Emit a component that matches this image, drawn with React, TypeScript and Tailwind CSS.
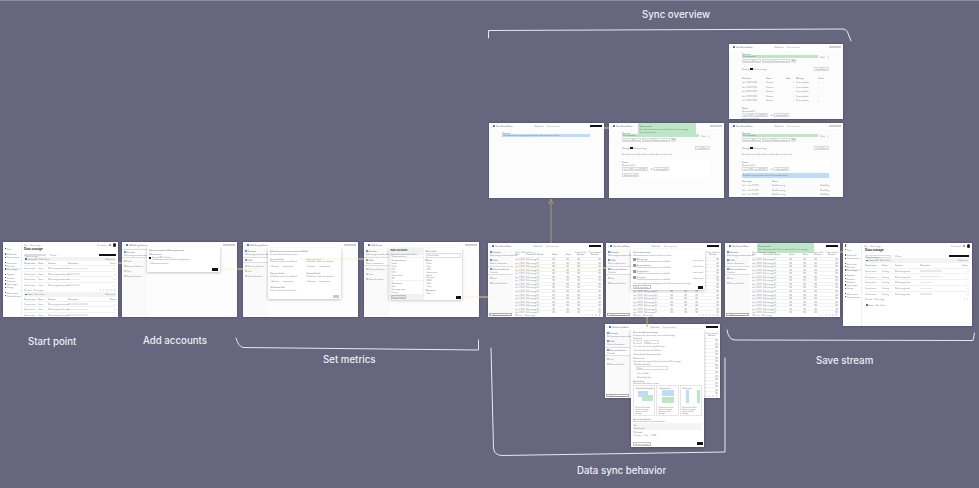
import type { ReactNode } from "react";

const syncRows = Array.from({ length: 16 }, (_, i) => i);
const steps = [
  { title: "Accounts", sub: "Bulk storage accounts selected" },
  { title: "Fields", sub: "Metrics, dimensions" },
  { title: "Data sync behavior", sub: "Schedule" },
  { title: "Sync", sub: "" },
  { title: "Review & confirm", sub: "" },
];

const Frame = ({ className, children }: { className: string; children?: ReactNode }) => (
  <div className={`absolute overflow-hidden bg-white shadow-[0_0_2px_rgba(30,30,50,0.45)] ${className}`}>{children}</div>
);

const Line = ({ className = "", children }: { className?: string; children: ReactNode }) => (
  <div className={`text-[1.8px] leading-[2px] whitespace-nowrap text-[#55565c] opacity-70 ${className}`}>{children}</div>
);

const Toast = ({ className }: { className: string }) => (
  <div className={`absolute bg-[#bce6c6] p-[1.5px] ${className}`}>
    <Line className="font-bold">Stream saved</Line>
    <Line className="mt-[1px]">Your data stream has been saved and will sync to storage</Line>
    <Line className="mt-[1.5px]">View sync overview</Line>
  </div>
);

const Header = ({ black = false, pills = false, title = "Data Stream Name" }: { black?: boolean; pills?: boolean; title?: string }) => (
  <div className="flex h-[6px] shrink-0 items-center gap-[1px] bg-white px-[2px]">
    <span className="text-[2px] leading-none text-[#888]">‹</span>
    <div className="h-[2.5px] w-[2.5px] rounded-[0.5px] bg-[#2f74d8]" />
    <Line className="font-bold">{title}</Line>
    {pills && (
      <div className="ml-[20px] flex gap-[3px]">
        <Line className="bg-[#eee] px-[1px]">Sync now</Line>
        <Line>Sync overview</Line>
      </div>
    )}
    <div className={`ml-auto h-[2.5px] w-[12px] ${black ? "bg-[#111]" : "bg-[#cfcfd2]"}`} />
  </div>
);

const Steps = ({ active, open = 5, button = false }: { active: number; open?: number; button?: boolean }) => (
  <div className="flex w-[25px] shrink-0 flex-col gap-[1px] bg-[#fafafa] pt-[1px]">
    {steps.map((step, i) => (
      <div key={step.title} className={`px-[2px] py-[1px] ${i === active ? "border-y-[0.3px] border-[#ddd] bg-white" : ""}`}>
        <div className="flex items-center gap-[1px]">
          <div className={`h-[1.5px] w-[1.5px] rounded-full ${i <= active ? "bg-[#2f74d8]" : "bg-[#bbb]"}`} />
          <Line className={i <= active ? "font-bold" : ""}>{step.title}</Line>
        </div>
        {step.sub && i < open && <Line className="mt-[1px]">{step.sub}</Line>}
      </div>
    ))}
    {button && (
      <div className="mx-[1px] mt-auto mb-[1px] flex h-[3px] items-center justify-center border-[0.3px] border-[#aaa]">
        <Line>Back to accounts</Line>
      </div>
    )}
  </div>
);

const SyncTable = () => (
  <div className="flex min-w-0 flex-1 flex-col px-[2px] pt-[1px]">
    <div className="flex h-[4px] items-center gap-[1px]">
      <Line>Filters</Line>
      <Line>Bulk accounts</Line>
      <Line className="ml-auto">Export to file</Line>
      <Line className="ml-[2px]">Sync selected</Line>
    </div>
    <div className="grid grid-cols-[11px_26px_14px_11px_14px_1fr] items-center">
      {["Date", "Partition ID / Stream", "Status", "Rows", "Duration", "Records"].map((h) => (
        <Line key={h} className="h-[3.5px] font-semibold">{h}</Line>
      ))}
      {syncRows.map((r) => (
        <div key={r} className="col-span-6 grid h-[3.55px] grid-cols-[11px_26px_14px_11px_14px_1fr] items-center border-t-[0.2px] border-[#f2f2f2]">
          <Line>Jun 2 2023</Line>
          <Line>Bulk storage 01</Line>
          <Line>100</Line>
          <Line>100</Line>
          <Line>100</Line>
          <Line className="text-right">100</Line>
        </div>
      ))}
    </div>
    <div className="mt-auto mb-[1px] flex h-[3px] items-center gap-[2px]">
      <Line>100 rows</Line>
      <Line>50 per page</Line>
      <Line className="ml-auto tracking-[1px]">1 2 3 4 5 6</Line>
    </div>
  </div>
);

const SyncScreen = ({ black = true }: { black?: boolean }) => (
  <div className="flex h-full flex-col">
    <Header black={black} pills />
    <div className="flex min-h-0 flex-1">
      <Steps active={2} button />
      <SyncTable />
    </div>
  </div>
);

const StorageRow = ({ status, green, long }: { status: string; green: boolean; long: boolean }) => (
  <div className="grid h-[5.5px] grid-cols-[14px_10px_20px_1fr_6px] items-center border-t-[0.2px] border-[#f2f2f2]">
    <Line>Stream name</Line>
    <Line className={green ? "text-[#2a9a55]" : "text-[#2f74d8]"}>{status}</Line>
    <Line>Bulk storage bucket path</Line>
    <div className={`h-[1.5px] bg-[#e8e8ea] ${long ? "w-[20px]" : "w-[12px]"}`} />
    <Line className="text-right">• •</Line>
  </div>
);

const Nav = ({ logo = false }: { logo?: boolean }) => (
  <div className="flex w-[19px] shrink-0 flex-col gap-[1.2px] border-r-[0.2px] border-[#eee] pt-[1px] pl-[1.5px]">
    <div className={`mb-[1px] h-[2.5px] w-[1px] ${logo ? "bg-[#e02020]" : "bg-white"}`} />
    {["Home", "", "Dashboards", "Custom reports", "", "Source data", "Data links", "Data storage", "", "Segments", "Attributes", "Audiences", "Tag manager", "Settings", "", "Admin center", "Connected apps"].map((item, i) =>
      item ? (
        <div key={i} className={`flex items-center gap-[0.7px] ${item === "Data storage" ? "bg-[#e9f0fb]" : ""}`}>
          <div className="h-[1.2px] w-[1.2px] bg-[#556]" />
          <Line>{item}</Line>
        </div>
      ) : (
        <div key={i} className="h-[1px]" />
      ),
    )}
  </div>
);

const TopBar = () => (
  <div className="flex h-[6px] items-center gap-[2px] px-[2px]">
    <Line>Data</Line>
    <Line>Data storage</Line>
    <Line className="ml-auto">My account</Line>
    <div className="h-[1.5px] w-[1.5px] rounded-full bg-[#888]" />
    <div className="h-[3.5px] w-[3.5px] rounded-full bg-[#222]" />
  </div>
);

const SectionBar = ({ label, green, children }: { label: string; green: boolean; children?: ReactNode }) => (
  <div className="flex h-[4.5px] items-center gap-[1px] bg-[#f3f3f4] px-[1px]">
    <div className="h-[1.5px] w-[1.5px] bg-[#2f74d8]" />
    <Line className="font-semibold">{label}</Line>
    <Line className={green ? "text-[#2a9a55]" : "text-[#2f74d8]"}>Active</Line>
    {children}
  </div>
);

const columns = ["Stream name", "Status", "Account", "Description", "Action"];

const StartPoint = () => (
  <div className="flex h-full">
    <Nav />
    <div className="min-w-0 flex-1">
      <TopBar />
      <div className="px-[2px]">
        <div className="text-[3px] font-bold leading-none text-[#333]">Data storage</div>
        <div className="mt-[2.5px] flex h-[3px] items-center gap-[4px]">
          <div className="h-[2.5px] w-[22px] border-[0.2px] border-[#ddd]"><Line>Search streams</Line></div>
          <Line>All time</Line>
          <div className="ml-auto h-[2.5px] w-[17px] bg-[#111]" />
        </div>
        <SectionBar label="Amazon S3 - Prod" green>
          <Line className="ml-auto">Add stream</Line>
        </SectionBar>
        <div className="grid h-[4px] grid-cols-[14px_10px_20px_1fr_6px] items-center">
          {columns.map((h) => <Line key={h} className="font-semibold">{h}</Line>)}
        </div>
        {[true, false, false, false].map((long, i) => <StorageRow key={i} status="Active" green long={long} />)}
        <div className="flex h-[5px] items-center gap-[2px]">
          <Line>25 items</Line>
          <Line>10 per page</Line>
          <Line className="ml-auto tracking-[1px]">1 2 3 4 5</Line>
        </div>
        <SectionBar label="Azure - Test" green>
          <Line className="ml-auto">Add stream</Line>
        </SectionBar>
        <div className="grid h-[4px] grid-cols-[14px_10px_20px_1fr_6px] items-center">
          {columns.map((h) => <Line key={h} className="font-semibold">{h}</Line>)}
        </div>
        {[true, true, true].map((long, i) => <StorageRow key={i} status="Active" green long={long} />)}
      </div>
    </div>
  </div>
);

const SaveStream = () => (
  <div className="flex h-full">
    <Nav logo />
    <div className="min-w-0 flex-1">
      <TopBar />
      <div className="px-[3px]">
        <div className="text-[3px] font-bold leading-none text-[#333]">Data storage</div>
        <div className="mt-[2.5px] flex h-[3px] items-center gap-[4px]">
          <div className="h-[3px] w-[26px] border-[0.2px] border-[#ddd]"><Line>Search streams</Line></div>
          <Line>All time</Line>
          <div className="ml-auto h-[2.5px] w-[20px] bg-[#111]" />
        </div>
        <div className="mt-[0.5px]">
          <SectionBar label="Amazon S3 - Prod" green={false}>
            <Line className="ml-auto">Add stream</Line>
          </SectionBar>
        </div>
        <div className="grid h-[5px] grid-cols-[17px_13px_25px_1fr_7px] items-center">
          {columns.map((h) => <Line key={h} className="font-semibold">{h}</Line>)}
        </div>
        {[true, true, false, false, false].map((long, i) => (
          <div key={i} className="grid h-[5.8px] grid-cols-[17px_13px_25px_1fr_7px] items-center border-t-[0.2px] border-[#f2f2f2]">
            <Line>Stream name</Line>
            <Line className="text-[#2f74d8]">Syncing</Line>
            <Line>Bulk storage path</Line>
            <div className={`h-[1.5px] bg-[#e8e8ea] ${long ? "w-[22px]" : "w-[12px]"}`} />
            <Line className="text-right">• •</Line>
          </div>
        ))}
        <div className="flex h-[6px] items-center gap-[2px]">
          <Line>25 items</Line>
          <Line>10 per page</Line>
          <Line className="ml-auto tracking-[1px]">1 2</Line>
        </div>
        <div className="mt-[0.5px] flex h-[4.5px] items-center gap-[1px] px-[1px]">
          <div className="h-[1.5px] w-[1.5px] bg-[#2f74d8]" />
          <Line className="font-semibold">Azure - Test</Line>
          <Line className="text-[#2a9a55]">Active</Line>
        </div>
      </div>
    </div>
  </div>
);

const WizardFrame = ({ title, active, open, children }: { title: string; active: number; open: number; children?: ReactNode }) => (
  <div className="relative flex h-full flex-col">
    <Header title={title} />
    <div className="flex min-h-0 flex-1">
      <Steps active={active} open={open} />
      <div className="flex-1 bg-[#fdfdfd]" />
    </div>
    {children}
  </div>
);

const Modal = ({ className, children }: { className: string; children: ReactNode }) => (
  <div className={`absolute bg-white p-[2px] shadow-[0_0.5px_3px_rgba(0,0,0,0.3)] ${className}`}>{children}</div>
);

const MetricOption = ({ title }: { title: string }) => (
  <div>
    <Line className="font-semibold">{title}</Line>
    <Line className="mt-[0.7px]">Select how values are collected</Line>
    <div className="mt-[3px] flex gap-[3px]">
      <Line className="text-[#2f74d8]">▪ Revenue</Line>
      <Line>▫ Impressions</Line>
    </div>
  </div>
);

const SortPanel = () => (
  <div className="flex h-full">
    <div className="w-[35px] bg-[#f1f1f2] p-[1.5px]">
      <div className="text-[2.4px] font-bold leading-none text-[#444]">Bulk Accounts</div>
      <Line className="mt-[1px]">Account list and attribute filters</Line>
      <div className="mt-[0.5px] bg-white px-[1px]">
        <Line>Select accounts ▾</Line>
      </div>
      <div className="mt-[1px] space-y-[1px] bg-white p-[1px]">
        {["Account metrics", "Spend", "Clicks", "CPC", "CTR", "Conversions", "ROI"].map((m, i) => (
          <Line key={m} className={i === 0 ? "font-semibold" : ""}>{m}</Line>
        ))}
      </div>
      <div className="mt-[1px] space-y-[1px] bg-white p-[1px]">
        {["Dimensions", "Date", "Campaign name", "Country"].map((m, i) => (
          <Line key={m} className={i === 0 ? "font-semibold" : ""}>{m}</Line>
        ))}
      </div>
      <Line className="mt-[1px] w-fit border-[0.2px] border-[#aaa] px-[1px]">Back to Fields</Line>
    </div>
    <div className="flex flex-1 flex-col p-[1.5px]">
      <Line className="font-semibold">Metric fields</Line>
      <div className="mt-[1px] border-[0.2px] border-[#ddd] px-[1px] py-[0.5px]"><Line>Search fields</Line></div>
      <Line className="mt-[1.5px] font-bold">Metrics</Line>
      <div className="mt-[1px] space-y-[0.9px]">
        {["Clicks", "Cost", "CPC", "Impressions", "Reach", "Revenue", "ROAS", "Sales", "Views"].map((m) => (
          <Line key={m}>▫ {m}</Line>
        ))}
      </div>
      <Line className="mt-[2px] font-bold">Dimensions</Line>
      <Line className="mt-[1px]">▫ Date</Line>
      <div className="mt-auto ml-auto h-[3px] w-[5px] bg-[#111]" />
    </div>
  </div>
);

const Overview = ({ green, sync, longTable }: { green: boolean; sync: boolean; longTable: boolean }) => (
  <div className="flex h-full flex-col bg-[#fcfcfc]">
    <Header black={!green && !sync} pills title="Data Stream Name" />
    <div className="mx-[13px] mr-[14px] min-h-0 flex-1">
      <Line className="mt-[2.5px] font-bold">Overview</Line>
      <div className="mt-[0.5px] flex items-center gap-[2px]">
        <div className={`h-[3px] flex-1 px-[1px] leading-none ${green ? "bg-[#bce6c6]" : "bg-[#bddcf9]"}`}>
          <Line>{green ? "Sync complete" : "Your data stream is syncing and may take a few moments to finish"}</Line>
        </div>
        {green && <Line>Failed</Line>}
        {green && <Line className="font-bold">⋮</Line>}
      </div>
      {green && (
        <div className="mt-[1px] flex gap-[1px]">
          <Line className="border-[0.2px] border-[#ccc] px-[0.5px]">Account, 500 rows</Line>
          <Line className="border-[0.2px] border-[#ccc] px-[0.5px]">Partition ID, Stream and more</Line>
          <Line className="bg-[#ddd] px-[0.5px]">More</Line>
        </div>
      )}
      {green && (
        <div className="mt-[4px] flex items-center gap-[1px]">
          <Line className="font-semibold">Syncing</Line>
          <div className="h-[2.5px] w-[2.5px] bg-[#111]" />
          <Line>Stream settings</Line>
          <Line className="ml-auto border-[0.2px] border-[#ccc] px-[1px]">Last 30 days</Line>
        </div>
      )}
      {sync && (
        <div className="mt-[6px]">
          <div className="grid grid-cols-[24px_20px_10px_22px_1fr] gap-y-[2.4px]">
            {["Date/time", "Status", "Rows", "Message", "Action"].map((h) => <Line key={h} className="font-semibold">{h}</Line>)}
            {[0, 1, 2, 3, 4].flatMap((r) => [
              <Line key={`${r}a`}>Jun 2 2023 10:45</Line>,
              <Line key={`${r}b`} className="text-[#2a9a55]">Success</Line>,
              <Line key={`${r}c`} className="pr-[2px] text-right">•</Line>,
              <Line key={`${r}d`}>Sync complete</Line>,
              <Line key={`${r}e`} className="font-bold">•</Line>,
            ])}
          </div>
        </div>
      )}
      {green && !sync && <Line className="mt-[3px]">No recent syncs. Data will be available after your first sync.</Line>}
      {green && (
        <div className={sync ? "mt-[6px]" : "mt-[5px] bg-white py-[1px]"}>
          <Line className="font-bold">Export</Line>
          <Line className="mt-[1px]">Manual backfill</Line>
          <div className="mt-[1px] flex items-center gap-[1px]">
            <Line className="border-[0.2px] border-[#ccc] px-[1px]">Jan 1 2023 - Jun 30 2023</Line>
            <Line className="ml-[2px]">Go</Line>
            <Line className="border-[0.2px] border-[#ccc] px-[1px]">Start backfill</Line>
          </div>
          {!longTable && <Line className="mt-[1.5px] w-fit border-[0.2px] border-[#ccc] px-[1px]">Refresh backfill</Line>}
        </div>
      )}
      {longTable && (
        <div>
          <div className="mt-[0.5px] h-[5px] bg-[#bddcf9] p-[1px]"><Line>Backfill is running and results will be available shortly</Line></div>
          <div className="mt-[2px] grid grid-cols-[30px_48px_1fr] gap-y-[2.5px]">
            {["Date range", "Status", ""].map((h) => <Line key={h} className="font-semibold">{h}</Line>)}
            {[0, 1, 2, 3, 4].flatMap((r) => [
              <Line key={`${r}a`}>Jan 1 - Jan 31 2023</Line>,
              <Line key={`${r}b`}>Backfill running</Line>,
              <Line key={`${r}c`} className="text-right">Backfilling</Line>,
            ])}
          </div>
        </div>
      )}
    </div>
  </div>
);

const StreamOption = ({ title, bars }: { title: string; bars: ReactNode }) => (
  <div className="flex min-w-0 flex-col overflow-hidden border-[0.2px] border-[#e5e5e5] p-[1px]">
    <Line className="font-semibold">▪ {title}</Line>
    <div className="relative mt-[1px] h-[14px]">{bars}</div>
    <p className="mt-[2px] text-[1.8px] leading-[2px] text-[#55565c] opacity-70">Choose how data loads to storage when records change</p>
  </div>
);

const TallModal = () => (
  <Modal className="left-[26px] top-[5px] z-10 h-[118px] w-[73px]">
    <Line className="font-bold">Data sync behavior settings</Line>
    <Line className="mt-[0.7px]">Configure how your stream syncs to bulk storage</Line>
    <Line className="mt-[1.5px] font-semibold">Frequency</Line>
    <div className="mt-[0.7px] flex gap-[2px]">
      <Line className="border-[0.2px] border-[#ccc] px-[3px]">1</Line>
      <Line className="border-[0.2px] border-[#ccc] pr-[8px] pl-[1px]">Days</Line>
    </div>
    <Line className="mt-[1px]">Sync every day at the scheduled time</Line>
    <Line className="mt-[2px]">▫ Sync data from the last 30 days</Line>
    <Line className="mt-[2px] font-semibold">▪ Sync data for the previous day</Line>
    <Line className="mt-[2px] font-semibold">Historic sync</Line>
    <Line className="mt-[0.7px]">Select the date range for the first data backfill to storage</Line>
    <Line className="mt-[1.5px] font-semibold">▪ Specific start date</Line>
    <Line className="mt-[0.7px] ml-[3px] w-[32px] border-[0.2px] border-[#ccc] px-[1px]">Date</Line>
    <Line className="mt-[2px] ml-[3px]">▫ Last available</Line>
    <Line className="mt-[2px] ml-[3px]">▫ All available data</Line>
    <Line className="mt-[2px] font-semibold">Data loading</Line>
    <Line className="mt-[0.7px]">Select how new data is written</Line>
    <div className="mt-[1px] grid grid-cols-3 gap-[1px]">
      <StreamOption
        title="Append and update"
        bars={
          <>
            <div className="absolute left-[3px] top-[1px] h-[6px] w-[10px] bg-[#bddcf9]" />
            <div className="absolute left-[7px] top-[5px] h-[6px] w-[11px] bg-[#bce6c6]" />
          </>
        }
      />
      <StreamOption
        title="Append only"
        bars={
          <>
            <div className="absolute left-[4px] top-[0px] h-[6px] w-[12px] bg-[#bddcf9]" />
            <div className="absolute left-[4px] top-[7px] h-[6px] w-[12px] bg-[#bce6c6]" />
          </>
        }
      />
      <StreamOption
        title="Overwrite"
        bars={
          <>
            <div className="absolute left-[4px] top-[0px] h-[13px] w-[3px] bg-[#bddcf9]" />
            <div className="absolute left-[15px] top-[0px] h-[13px] w-[3px] bg-[#bce6c6]" />
          </>
        }
      />
    </div>
    <Line className="mt-[1.5px] font-semibold">Data partition format</Line>
    <Line className="mt-[0.5px]">Choose how files are split into folders</Line>
    <div className="mt-[0.7px] bg-[#f5f5f5] p-[0.7px]">
      <Line>Day</Line>
      <Line className="mt-[1px]">Sample path</Line>
    </div>
    <Line className="mt-[1.5px] font-semibold">File format</Line>
    <div className="mt-[1px] flex gap-[2px]">
      <Line>▪ Parquet</Line>
      <Line>▫ Avro</Line>
      <Line>▫ JSON</Line>
    </div>
    <div className="absolute right-[1.5px] bottom-[1.5px] left-[2px] flex items-center justify-between">
      <Line className="border-[0.2px] border-[#aaa] px-[1px]">Preview settings</Line>
      <div className="h-[3px] w-[6px] bg-[#111]" />
    </div>
  </Modal>
);

const Label = ({ className, children }: { className: string; children: ReactNode }) => (
  <div className={`absolute whitespace-nowrap text-[9.7px] font-medium leading-none text-[#eeeef4] ${className}`}>{children}</div>
);

export default function App() {
  return (
    <div className="relative h-[488px] w-[979px] overflow-hidden bg-[#67667f] font-[Inter,sans-serif]">
      <Frame className="left-[3px] top-[242px] h-[75px] w-[115px]"><StartPoint /></Frame>

      <Frame className="left-[122px] top-[242px] h-[75px] w-[115px]">
        <WizardFrame title="Bulk Storage Stream" active={0} open={1}>
          <Modal className="left-[25px] top-[5px] h-[25px] w-[73px]">
            <Line className="font-bold">Select accounts for bulk storage stream</Line>
            <Line className="mt-[2px] font-semibold">Bulk accounts</Line>
            <div className="mt-[1px] flex items-center gap-[1px]">
              <div className="h-[2px] w-[2px] bg-[#111]" />
              <div>
                <Line>Account 001 - Primary</Line>
                <Line>Connected account with bulk storage access</Line>
              </div>
            </div>
            <Line className="mt-[1.5px]">▫ Add another account</Line>
            <div className="absolute right-[2px] bottom-[1.5px] h-[3px] w-[6px] bg-[#111]" />
          </Modal>
        </WizardFrame>
      </Frame>

      <Frame className="left-[243px] top-[242px] h-[75px] w-[115px]">
        <WizardFrame title="Bulk Storage Stream" active={1} open={1}>
          <Modal className="left-[25px] top-[6px] h-[51px] w-[73px]">
            <Line className="font-bold">Select how to set up your metrics and fields</Line>
            <Line className="mt-[0.7px]">Set your fields and data sources</Line>
            <div className="mt-[3px] grid grid-cols-2 gap-x-[4px] gap-y-[5px]">
              <MetricOption title="Account details" />
              <MetricOption title="Campaign details" />
              <MetricOption title="Ad group details" />
              <MetricOption title="Keyword details" />
            </div>
            <Line className="mt-[4px] font-semibold">Add custom field</Line>
            <Line className="mt-[0.7px]">Create a metric from a formula</Line>
            <div className="absolute right-[2px] bottom-[1.5px] h-[3px] w-[6px] bg-[#c9c9cc]" />
          </Modal>
        </WizardFrame>
      </Frame>

      <Frame className="left-[364px] top-[242px] h-[75px] w-[115px]">
        <WizardFrame title="Bulk Stream" active={1} open={2}>
          <div className="absolute left-[25px] top-[6px] h-[52px] w-[73px] overflow-hidden bg-white shadow-[0_0.5px_3px_rgba(0,0,0,0.25)]">
            <SortPanel />
          </div>
        </WizardFrame>
      </Frame>

      <Frame className="left-[488px] top-[243px] h-[74px] w-[115px]"><SyncScreen /></Frame>

      <Frame className="left-[606px] top-[243px] h-[74px] w-[115px]">
        <SyncScreen />
        <Modal className="left-[25px] top-[6px] h-[41px] w-[74px]">
          <Line className="font-bold">Select data streams</Line>
          <Line className="mt-[0.7px]">Add accounts and set up how data is synced</Line>
          {["Bulk storage", "Data warehouse", "Cloud archive", "File export"].map((s) => (
            <div key={s} className="mt-[2px] flex items-center gap-[1px]">
              <div className="h-[2.5px] w-[2.5px] bg-[#999]" />
              <div>
                <Line className="font-semibold">{s}</Line>
                <Line>Send data from accounts on a schedule</Line>
              </div>
              <Line className="ml-auto">Last synced</Line>
            </div>
          ))}
          <Line className="mt-[2px]">You can change these settings later from the stream overview page</Line>
          <div className="absolute right-[2px] bottom-[1px] left-[2px] flex items-center justify-between">
            <Line className="border-[0.2px] border-[#aaa] px-[1px]">Back to settings</Line>
            <div className="h-[3px] w-[5px] bg-[#111]" />
          </div>
        </Modal>
      </Frame>

      <Frame className="left-[725px] top-[243px] h-[74px] w-[115px]">
        <SyncScreen />
        <Toast className="left-[32px] top-0 h-[10px] w-[57px]" />
      </Frame>

      <Frame className="left-[843px] top-[243px] h-[83px] w-[129px]"><SaveStream /></Frame>

      <Frame className="left-[489px] top-[123px] h-[75px] w-[115px]">
        <Overview green={false} sync={false} longTable={false} />
      </Frame>

      <Frame className="left-[609px] top-[123px] h-[75px] w-[115px]">
        <Overview green sync={false} longTable={false} />
        <Toast className="left-[29px] top-0 h-[11px] w-[58px]" />
      </Frame>

      <Frame className="left-[729px] top-[44px] h-[75px] w-[114px]">
        <Overview green sync longTable={false} />
      </Frame>

      <Frame className="left-[729px] top-[123px] h-[74px] w-[114px]">
        <Overview green sync={false} longTable />
      </Frame>

      <Frame className="left-[605px] top-[324px] h-[74px] w-[115px]"><SyncScreen /></Frame>
      <div className="absolute left-[605px] top-[324px] h-[124px] w-[115px]"><TallModal /></div>

      <svg className="pointer-events-none absolute inset-0" width="979" height="488" fill="none">
        <path d="M0 0.5H979" stroke="#8d8ca0" strokeWidth="1" />
        <g stroke="#fbf3b8" strokeWidth="1" opacity="0.75">
          <path d="M111 263H122" />
          <path d="M220 269H258" />
          <path d="M300 259H372" />
          <path d="M462 297H492" />
          <path d="M507 268H610" />
          <path d="M838 252H846" />
          <path d="M601 128H612" />
        </g>
        <path d="M551 243V200M549 204L551 199L553 204" stroke="#a99a72" strokeWidth="1" />
        <path d="M647 317V327" stroke="#d9a94e" strokeWidth="1" />
        <g stroke="#e8e8ef" strokeWidth="1" strokeLinecap="round" strokeLinejoin="round">
          <path d="M488.5 38V30.5L843 29Q846 29 847.5 32L851 41" />
          <path d="M236 338Q238 346 243 347.5L478.5 350V340" />
          <path d="M727 330Q728.500 340 735 340L973 340.500L974.500 333" />
          <path d="M491 348L493.500 448Q494 455 502 455.500L725 452V358" />
        </g>
      </svg>

      <Label className="left-[28px] top-[337px]">Start point</Label>
      <Label className="left-[143px] top-[336px]">Add accounts</Label>
      <Label className="left-[323px] top-[355px]">Set metrics</Label>
      <Label className="left-[816px] top-[356px]">Save stream</Label>
      <Label className="left-[642px] top-[10px]">Sync overview</Label>
      <Label className="left-[577px] top-[466px]">Data sync behavior</Label>
    </div>
  );
}
